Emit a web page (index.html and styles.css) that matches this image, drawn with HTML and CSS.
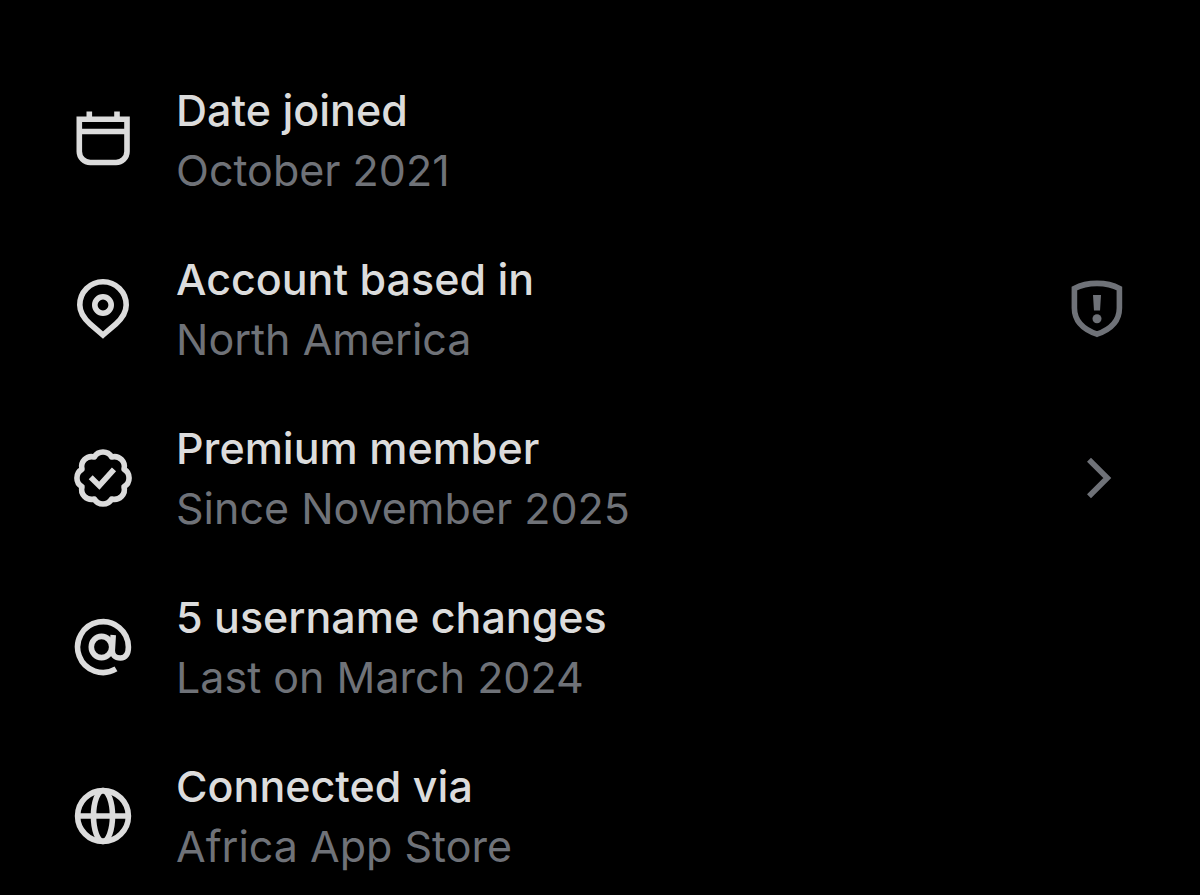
FILE: index.html
```
<!DOCTYPE html>
<html lang="en">
<head>
    <meta charset="utf-8">
    <meta name="viewport" content="width=device-width, initial-scale=1">
    <title>About this account</title>
    <link rel="stylesheet" href="styles.css">
</head>
<body>
    <ul class="account-list">
        <!-- Date joined -->
        <li class="account-row">
            <svg class="icon" viewBox="0 0 60 60" aria-hidden="true">
                <path d="M6.3 9.2H54V41.5a11 11 0 0 1-11 11H17.3a11 11 0 0 1-11-11zM6.3 21.5H54M16.3 1.5v8M44 1.5v8"/>
            </svg>
            <div class="details">
                <div class="title">Date joined</div>
                <div class="subtitle">October 2021</div>
            </div>
        </li>

        <!-- Location -->
        <li class="account-row">
            <svg class="icon" viewBox="0 0 60 60" aria-hidden="true">
                <path d="M30 56L43 44.800C50 38.500 53.200 32.500 53.200 26A23.200 23.200 0 0 0 6.800 26C6.800 32.500 10 38.500 17 44.800Z"/>
                <circle cx="30" cy="26" r="8.200"/>
            </svg>
            <div class="details">
                <div class="title">Account based in</div>
                <div class="subtitle">North America</div>
            </div>
            <button class="action" type="button" aria-label="Location notice">
                <svg class="icon" viewBox="0 0 60 60" aria-hidden="true">
                    <path d="M30 4.400C38.500 4.400 46 6 52.400 9.500V29C52.400 43 42 51 30 55.200C18 51 7.400 43 7.400 29V9.500C14 6 21.500 4.400 30 4.400Z"/>
                    <path class="filled" d="M26 16h8l-1 15.500h-6z"/>
                    <circle class="filled" cx="30" cy="39.700" r="4.500"/>
                </svg>
            </button>
        </li>

        <!-- Premium -->
        <li class="account-row">
            <svg class="icon" viewBox="0 0 60 60" aria-hidden="true">
                <path class="rounded" d="M21.300 9A10 10 0 0 1 38.700 9A10 10 0 0 1 51 21.300A10 10 0 0 1 51 38.700A10 10 0 0 1 38.700 51A10 10 0 0 1 21.300 51A10 10 0 0 1 9 38.700A10 10 0 0 1 9 21.300A10 10 0 0 1 21.300 9Z"/>
                <path d="M17.700 29.300L26.300 37.700L41 21.300"/>
            </svg>
            <div class="details">
                <div class="title">Premium member</div>
                <div class="subtitle">Since November 2025</div>
            </div>
            <button class="action" type="button" aria-label="Premium details">
                <svg class="icon" viewBox="0 0 60 60" aria-hidden="true">
                    <path d="M22 11.700L40.300 30L22 48.300"/>
                </svg>
            </button>
        </li>

        <!-- Username history -->
        <li class="account-row">
            <svg class="icon" viewBox="0 0 60 60" aria-hidden="true">
                <path d="M43 51.900A25.400 25.400 0 1 1 55.400 30C55.400 37 52.500 41 47.500 41C42 41 39 38 39.300 33L40.200 18"/>
                <ellipse cx="28.500" cy="30" rx="10.200" ry="10.600"/>
            </svg>
            <div class="details">
                <div class="title">5 username changes</div>
                <div class="subtitle">Last on March 2024</div>
            </div>
        </li>

        <!-- Connection -->
        <li class="account-row">
            <svg class="icon" viewBox="0 0 60 60" aria-hidden="true">
                <circle cx="30" cy="30" r="25.400"/>
                <ellipse cx="30" cy="30" rx="9.500" ry="25.400"/>
                <path d="M4.600 30H55.400"/>
            </svg>
            <div class="details">
                <div class="title">Connected via</div>
                <div class="subtitle">Africa App Store</div>
            </div>
        </li>
    </ul>
</body>
</html>
```
FILE: styles.css
```
/* Global Styles */
body {
    margin: 0;
    background-color: #000000;
    color: #dcdcdc;
    font-family: Inter, "Liberation Sans", sans-serif;
}

/* Account List */
.account-list {
    display: flex;
    flex-direction: column;
    gap: 49px;
    margin: 0;
    padding: 80px 73px 16px;
    list-style: none;
}

.account-row {
    display: flex;
    align-items: center;
    gap: 43px;
}

.details {
    flex: 1;
    font-size: 43px;
    line-height: 60px;
}

.title {
    font-weight: 500;
}

.subtitle {
    color: #6f7278;
}

/* Icons */
.icon {
    display: block;
    flex: none;
    width: 60px;
    height: 60px;
    fill: none;
    stroke: currentColor;
    stroke-width: 5.6;
}

.icon .rounded {
    stroke-linejoin: round;
}

.icon .filled {
    fill: currentColor;
    stroke: none;
}

/* Row Actions */
.action {
    padding: 0;
    background: none;
    border: none;
    color: #6f7278;
    cursor: pointer;
}
```
